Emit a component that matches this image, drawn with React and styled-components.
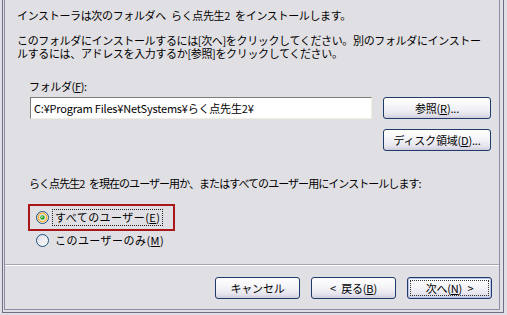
import React, { useState } from "react";
import styled, { createGlobalStyle } from "styled-components";

const GlobalStyle = createGlobalStyle`
  html, body {
    margin: 0;
    padding: 0;
    background: #e0dfe3;
  }
  body {
    font-family: "Noto Sans CJK JP", "DejaVu Sans", sans-serif;
    font-size: 11px;
    color: #000;
  }
`;

const Outer = styled.div`
  margin-left: 2px;
  width: 502px;
  height: 313px;
  box-sizing: border-box;
  border: 1px solid #6e6e86;
  border-top: none;
  padding: 0 3px 2px 1px;
  background: #e0dfe3;
`;

const Inner = styled.div`
  height: 100%;
  box-sizing: border-box;
  border: 1px solid #8d8ca4;
  border-top: none;
  display: flex;
  flex-direction: column;
`;

const Body = styled.div`
  flex: 1;
  padding: 9px 0 0 12px;
`;

const Line = styled.div`
  height: 13px;
  line-height: 13px;
  white-space: nowrap;
  letter-spacing: ${(p) => (p.$ls != null ? p.$ls : -0.35)}px;
  word-spacing: 3px;
  margin-top: ${(p) => p.$top || 0}px;
  margin-left: ${(p) => p.$left || 0}px;
`;

const FolderRow = styled.div`
  display: flex;
  align-items: flex-start;
  gap: 11px;
  margin: 4px 0 0 13px;
`;

const PathInput = styled.input`
  width: 342px;
  height: 22px;
  box-sizing: border-box;
  border: 1px solid;
  border-color: #7c7c7c #f1efe2 #f1efe2 #7c7c7c;
  background: #fff;
  padding: 0 3px;
  font-family: inherit;
  font-size: 11px;
  letter-spacing: -0.2px;
  outline: none;
`;

const ButtonStack = styled.div`
  display: flex;
  flex-direction: column;
  gap: 10px;
`;

const Button = styled.button`
  position: relative;
  width: ${(p) => p.$w || 108}px;
  height: 22px;
  box-sizing: border-box;
  border: 1px solid #1f3a6b;
  border-radius: 3px;
  background: linear-gradient(#ffffff 0%, #f4f4f8 45%, #e6e5ee 80%, #cfcddd 100%);
  box-shadow: ${(p) => (p.$default ? "inset 0 0 0 1px #b6c3ea" : "none")};
  font-family: inherit;
  font-size: 11px;
  letter-spacing: -0.2px;
  word-spacing: 3px;
  color: #000;
  padding: 0;
  display: flex;
  align-items: center;
  justify-content: center;
  white-space: pre;
  cursor: default;
`;

const FocusBox = styled.span`
  position: absolute;
  inset: 2px;
  border: 1px dotted #333;
  pointer-events: none;
`;

const Highlight = styled.div`
  width: 147px;
  height: 27px;
  box-sizing: border-box;
  border: 2px solid #a8161a;
  margin: 14px 0 0 11px;
  display: flex;
  align-items: center;
  padding-left: 6px;
`;

const RadioRow = styled.label`
  display: flex;
  align-items: center;
  gap: 3px;
  height: 14px;
  margin: ${(p) => p.$m || "0"};
  white-space: nowrap;
`;

const RadioText = styled.span`
  line-height: 13px;
  padding: 1px 2px;
  letter-spacing: 0.45px;
  border: 1px ${(p) => (p.$focus ? "dotted #222" : "solid transparent")};
`;

const Separator = styled.div`
  height: 0;
  border-top: 1px solid #a6a5b1;
  border-bottom: 1px solid #ffffff;
`;

const Footer = styled.div`
  height: 43px;
  box-sizing: border-box;
  padding: 11px 7px 0 0;
  display: flex;
  justify-content: flex-end;
  gap: 11px;
`;

const Radio = ({ checked }) => (
  <svg width="13" height="13" viewBox="0 0 13 13">
    <defs>
      <linearGradient id={checked ? "rg1" : "rg0"} x1="0" y1="0" x2="1" y2="1">
        <stop offset="0" stopColor="#dcdbe4" />
        <stop offset="1" stopColor="#ffffff" />
      </linearGradient>
    </defs>
    <circle cx="6.5" cy="6.5" r="6" fill={`url(#${checked ? "rg1" : "rg0"})`} stroke="#1c5180" />
    {checked && (
      <>
        <circle cx="6.5" cy="6.5" r="4.2" fill="none" stroke="#f8b33e" strokeWidth="1.6" />
        <circle cx="6.5" cy="6.5" r="2.3" fill="#2ea22e" />
        <circle cx="6" cy="6" r="0.9" fill="#9fe39f" />
      </>
    )}
  </svg>
);

export default function App() {
  const [scope, setScope] = useState("all");

  return (
    <>
      <GlobalStyle />
      <Outer>
        <Inner>
          <Body>
            <Line>インストーラは次のフォルダへ らく点先生2 をインストールします。</Line>
            <Line $top={12}>
              このフォルダにインストールするには[次へ]をクリックしてください。別のフォルダにインストー
            </Line>
            <Line>ルするには、アドレスを入力するか[参照]をクリックしてください。</Line>

            <Line $top={20} $left={12}>
              フォルダ(<u>F</u>):
            </Line>
            <FolderRow>
              <PathInput defaultValue="C:¥Program Files¥NetSystems¥らく点先生2¥" />
              <ButtonStack>
                <Button>
                  参照(<u>R</u>)...
                </Button>
                <Button>
                  ディスク領域(<u>D</u>)...
                </Button>
              </ButtonStack>
            </FolderRow>

            <Line $top={26} $left={12} $ls={-0.95}>
              らく点先生2 を現在のユーザー用か、またはすべてのユーザー用にインストールします:
            </Line>

            <Highlight>
              <RadioRow onClick={() => setScope("all")}>
                <Radio checked={scope === "all"} />
                <RadioText $focus>
                  すべてのユーザー(<u>E</u>)
                </RadioText>
              </RadioRow>
            </Highlight>
            <RadioRow $m="2px 0 0 19px" onClick={() => setScope("me")}>
              <Radio checked={scope === "me"} />
              <RadioText>
                このユーザーのみ(<u>M</u>)
              </RadioText>
            </RadioRow>
          </Body>
          <Separator />
          <Footer>
            <Button $w={85}>キャンセル</Button>
            <Button $w={85}>
              {"< "}戻る(<u>B</u>)
            </Button>
            <Button $w={85} $default>
              次へ(<u>N</u>){" >"}
              <FocusBox />
            </Button>
          </Footer>
        </Inner>
      </Outer>
    </>
  );
}
